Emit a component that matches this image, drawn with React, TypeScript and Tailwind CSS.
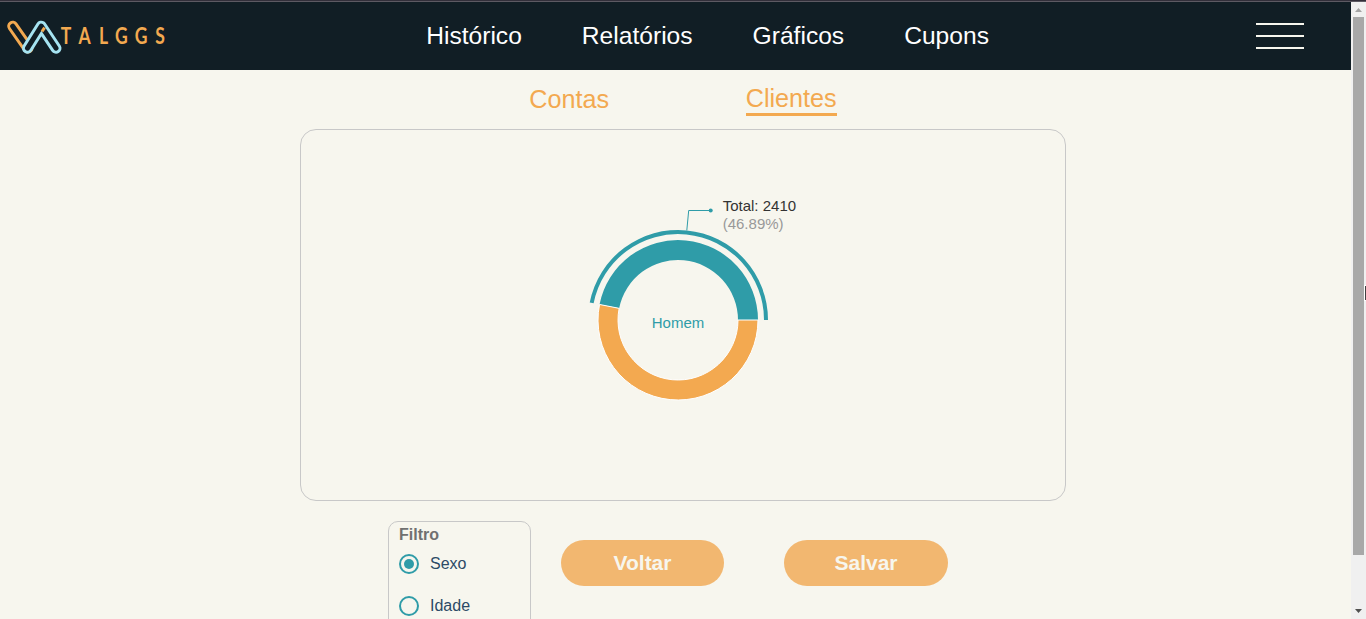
const CX = 378;
const CY = 190;

function point(radius: number, degrees: number) {
  const a = (degrees * Math.PI) / 180;
  return `${CX + radius * Math.cos(a)} ${CY - radius * Math.sin(a)}`;
}

function sector(inner: number, outer: number, start: number, end: number) {
  const large = end - start > 180 ? 1 : 0;
  return `M${point(outer, start)} A${outer} ${outer} 0 ${large} 0 ${point(outer, end)} L${point(inner, end)} A${inner} ${inner} 0 ${large} 1 ${point(inner, start)} Z`;
}

function Logo() {
  const letters: [string, number][] = [["T", 66], ["A", 84.5], ["L", 103.5], ["G", 121.3], ["G", 141], ["S", 160]];
  return (
    <svg width="170" height="68" viewBox="0 2 170 68" className="shrink-0">
      <g fill="none" strokeLinecap="round" strokeLinejoin="round">
        <path d="M12.7 26.2 L28 48" stroke="#f3a950" strokeWidth="11" />
        <path d="M12.7 26.2 L28 48" stroke="#111e25" strokeWidth="5" />
        <path d="M27.5 48.2 L41.3 26.2 L56 48.2" stroke="#a5e3f1" strokeWidth="11" />
        <path d="M27.5 48.2 L41.3 26.2 L56 48.2" stroke="#111e25" strokeWidth="5" />
        <path d="M42 31.5 L44.6 27.6" stroke="#f3a950" strokeWidth="3" strokeLinecap="butt" />
      </g>
      <g fill="#f3a950" fontFamily="Lato, 'Open Sans', sans-serif" fontSize="22.5" fontWeight="700" textAnchor="middle">
        {letters.map(([c, x]) => (
          <text key={x} transform={`translate(${x} 44.2) scale(0.78 1)`}>{c}</text>
        ))}
      </g>
    </svg>
  );
}

function Chart() {
  return (
    <svg width="764" height="370" viewBox="1 0 764 370" className="font-['Liberation_Sans',Arial,sans-serif] text-[15px]">
      <path d={sector(60, 80, 0, 168.8)} fill="#2f9ca8" />
      <path d={sector(86, 90, 0, 168.8)} fill="#2f9ca8" />
      <path d="M386.8 100.4 L388.7 80.5 H410.7" fill="none" stroke="#2f9ca8" />
      <circle cx="410.7" cy="80.5" r="2" fill="#2f9ca8" />
      <text x="422.7" y="81" fill="#333">Total: 2410</text>
      <text x="422.7" y="99" fill="#999">(46.89%)</text>
      <text x="378" y="198" textAnchor="middle" fill="#2f9ca8">Homem</text>
      <path d={sector(60, 80, 168.8, 360)} fill="#f3a950" stroke="#fff" strokeWidth="1" />
    </svg>
  );
}

function Radio({ label, checked }: { label: string; checked?: boolean }) {
  return (
    <label className="flex h-[42px] items-start gap-[11px] text-base leading-5 text-[#2c4a66]">
      <span className="flex size-5 items-center justify-center rounded-full border-2 border-[#2f9ca8]">
        {checked && <span className="size-2.5 rounded-full bg-[#2f9ca8]" />}
      </span>
      {label}
    </label>
  );
}

function Scrollbar() {
  return (
    <div className="relative flex h-[617px] w-[15px] shrink-0 flex-col items-center bg-[#f0f0f0]">
      <svg width="15" height="15" viewBox="0 0 15 15" className="shrink-0"><path d="M4 10 L7.5 6 L11 10 Z" fill="#a3a3a3" /></svg>
      <div className="h-[538px] w-[11px] shrink-0 bg-[#a8a8a8]" />
      <svg width="15" height="15" viewBox="0 0 15 15" className="mt-auto shrink-0"><path d="M4 5 L7.5 9 L11 5 Z" fill="#505050" /></svg>
      <div className="absolute right-0 top-[283px] h-4 w-0.5 border-y border-l border-white bg-[#404040]" />
    </div>
  );
}

export default function App() {
  return (
    <div className="h-[619px] overflow-hidden bg-[#f7f6ee] font-['Liberation_Sans',Arial,sans-serif]">
      <div className="h-0.5 border-b border-[#5d5a63] bg-[#322f3a]" />
      <div className="flex">
        <div className="h-[617px] w-[1351px] overflow-hidden">
          <header className="flex h-[68px] items-center bg-[#111e25]">
            <Logo />
            <nav className="ml-[256.2px] flex gap-[60px] text-[24.6px] leading-7 text-white">
              <a>Histórico</a>
              <a>Relatórios</a>
              <a>Gráficos</a>
              <a>Cupons</a>
            </nav>
            <div className="ml-auto mr-[47px] flex w-12 flex-col gap-2.5">
              <span className="h-0.5 bg-[#f7f6ee]" />
              <span className="h-0.5 bg-[#f7f6ee]" />
              <span className="h-0.5 bg-[#f7f6ee]" />
            </div>
          </header>
          <div className="flex h-[59px] pl-[529.2px] pt-[14px] text-[25.2px] leading-[29px] text-[#f3a950]">
            <a className="w-[216.5px] pt-px">Contas</a>
            <a className="h-8 border-b-3 border-[#f3a950]">Clientes</a>
          </div>
          <section className="ml-[300px] h-[372px] w-[766px] rounded-2xl border border-[#c8c8c8]">
            <Chart />
          </section>
          <div className="flex items-start pl-[388px] pt-5">
            <fieldset className="mr-[30px] h-[150px] w-[143px] rounded-[10px] border border-[#c8c8c8] pl-2.5 pt-[3px]">
              <div className="mb-[9px] text-base font-bold leading-5 text-[#707070]">Filtro</div>
              <Radio label="Sexo" checked />
              <Radio label="Idade" />
            </fieldset>
            <button className="mr-[60px] mt-[19px] h-[46px] w-[163px] rounded-full bg-[#f2b770] text-[21px] font-bold text-[#f7f6ee]">Voltar</button>
            <button className="mt-[19px] h-[46px] w-[164px] rounded-full bg-[#f2b770] text-[21px] font-bold text-[#f7f6ee]">Salvar</button>
          </div>
        </div>
        <Scrollbar />
      </div>
    </div>
  );
}
